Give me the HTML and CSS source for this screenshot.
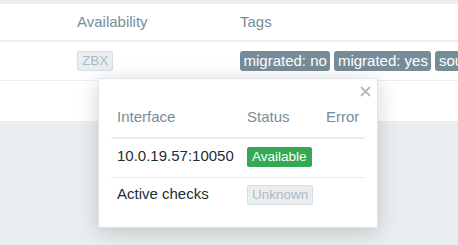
FILE: index.html
```html
<!DOCTYPE html>
<html lang="en">
<head>
    <meta charset="UTF-8">
    <meta name="viewport" content="width=device-width, initial-scale=1.0">
    <title>Hosts</title>
    <link rel="stylesheet" href="styles.css">
</head>
<body>
    <div class="page">
        <div class="hosts">
            <div class="hosts-row hosts-head">
                <div class="cell"></div>
                <div class="cell">Availability</div>
                <div class="cell">Tags</div>
            </div>
            <div class="hosts-row hosts-item">
                <div class="cell"></div>
                <div class="cell"><span class="status status-grey">ZBX</span></div>
                <div class="cell tags">
                    <span class="tag">migrated: no</span>
                    <span class="tag">migrated: yes</span>
                    <span class="tag">source: zabbix</span>
                </div>
            </div>
            <div class="hosts-row hosts-blank"></div>
        </div>

        <div class="hintbox">
            <button class="hint-close" title="Close">
                <svg width="11" height="11" viewBox="0 0 11 11">
                    <path d="M1 1 L10 10 M10 1 L1 10" stroke="#aebbc3" stroke-width="1.8" fill="none"/>
                </svg>
            </button>
            <div class="hint-table">
                <div class="hint-th">Interface</div>
                <div class="hint-th">Status</div>
                <div class="hint-th">Error</div>

                <div class="hint-td first">10.0.19.57:10050</div>
                <div class="hint-td first"><span class="status status-green">Available</span></div>
                <div class="hint-td first"></div>

                <div class="hint-td">Active checks</div>
                <div class="hint-td"><span class="status status-grey">Unknown</span></div>
                <div class="hint-td"></div>
            </div>
        </div>
    </div>
</body>
</html>
```

FILE: styles.css
```css
html, body {
    height: 100%;
}
body {
    margin: 0;
    font-family: "Liberation Sans", Arial, sans-serif;
    font-size: 15px;
    color: #1f2c33;
    background: #ebeef0;
}
.page {
    position: relative;
    min-height: 100%;
    padding-top: 4px;
    box-sizing: border-box;
}
.hosts {
    background: #ffffff;
    overflow: hidden;
}
.hosts-row {
    display: grid;
    grid-template-columns: 77px 163px 1fr;
}
.hosts-head {
    height: 38px;
    padding-top: 9px;
    box-sizing: border-box;
    line-height: 17px;
    color: #768d99;
    border-bottom: 2px solid #ebeef0;
}
.hosts-item {
    height: 38px;
    align-items: center;
    border-bottom: 1px solid #ebeef0;
}
.hosts-blank {
    height: 40px;
}
.tags {
    display: flex;
    gap: 4px;
    min-width: 0;
    overflow: hidden;
    white-space: nowrap;
}
.tag {
    flex-shrink: 0;
    background: #768d99;
    color: #ffffff;
    padding: 0 3.5px;
    line-height: 20px;
    border-radius: 3px;
}
.status {
    display: inline-block;
    font-size: 13.5px;
    line-height: 18px;
    padding: 0 4px;
    border: 1px solid;
    border-radius: 2px;
}
.status-grey {
    background: #ebeef0;
    border-color: #d9dfe3;
    color: #acbbc2;
}
.status-green {
    background: #34a853;
    border-color: #34a853;
    color: #ffffff;
}
.hintbox {
    position: absolute;
    left: 98px;
    top: 78px;
    width: 280px;
    height: 150px;
    box-sizing: border-box;
    padding: 25px 12px 0;
    background: #ffffff;
    border: 1px solid #dfe4e7;
    box-shadow: 0 4px 20px rgba(0, 0, 0, 0.18);
}
.hint-close {
    position: absolute;
    top: 7px;
    right: 6px;
    width: 11px;
    height: 11px;
    padding: 0;
    border: none;
    background: none;
    cursor: pointer;
}
.hint-close svg {
    display: block;
}
.hint-table {
    display: grid;
    grid-template-columns: 130px 79px 1fr;
}
.hint-th {
    padding: 4px 6px 12px;
    line-height: 17px;
    color: #768d99;
    border-bottom: 2px solid #ebeef0;
}
.hint-td {
    height: 36px;
    box-sizing: border-box;
    padding: 7px 6px 0;
    line-height: 18px;
    white-space: nowrap;
}
.hint-td.first {
    height: 39px;
    padding-top: 8px;
    border-bottom: 1px solid #ebeef0;
}
```
